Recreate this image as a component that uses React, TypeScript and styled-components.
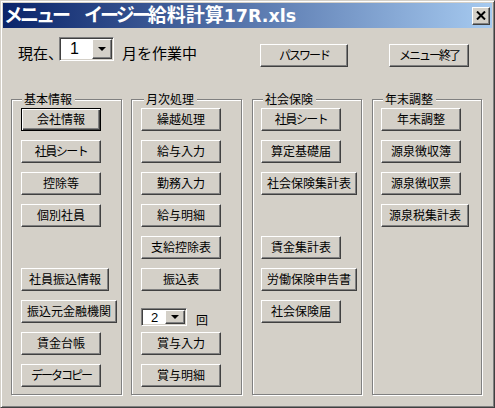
import React from "react";
import styled, { createGlobalStyle } from "styled-components";

const GlobalStyle = createGlobalStyle`
  html, body {
    margin: 0;
    padding: 0;
    background: #d4d0c8;
  }
  body {
    font-family: "Liberation Sans", "Noto Sans CJK JP", sans-serif;
  }
`;

const face = `"Liberation Sans", "Noto Sans CJK JP", sans-serif`;

const Window = styled.div`
  box-sizing: border-box;
  width: 495px;
  height: 408px;
  background: #d4d0c8;
  border: 1px solid;
  border-color: #d4d0c8 #404040 #404040 #d4d0c8;
  box-shadow: inset 1px 1px #fff, inset -1px -1px #808080;
  padding: 2px;
  display: flex;
  flex-direction: column;
`;

const TitleBar = styled.div`
  height: 25px;
  display: flex;
  align-items: center;
  justify-content: space-between;
  background: linear-gradient(to right, #0a246a, #a6caf0);
  padding: 0 2px 0 1px;
`;

const TitleText = styled.div`
  color: #fff;
  font-family: ${face};
  font-weight: bold;
  font-size: 19px;
  line-height: 25px;
  white-space: pre;
`;

// kana are narrower than kanji in the original UI font
const Kana = styled.span<{ $ml?: number }>`
  letter-spacing: -3px;
  margin-left: ${({ $ml }) => $ml ?? 0}px;
`;

const Latin = styled.span`
  font-family: "DejaVu Sans", sans-serif;
  font-size: 17.5px;
`;

const CloseButton = styled.div`
  box-sizing: border-box;
  width: 18px;
  height: 18px;
  background: #d4d0c8;
  border: 1px solid;
  border-color: #fff #404040 #404040 #fff;
  box-shadow: inset -1px -1px #808080;
  display: flex;
  align-items: center;
  justify-content: center;
`;

const Body = styled.div`
  display: flex;
  flex-direction: column;
  padding: 9px 0 0 8px;
`;

const TopBar = styled.div`
  display: flex;
  align-items: flex-start;
  justify-content: space-between;
  padding: 0 23px 0 7px;
  height: 30px;
`;

const TopLeft = styled.div`
  display: flex;
  align-items: flex-start;
`;

const TopRight = styled.div`
  display: flex;
  gap: 41px;
  padding-top: 7px;
`;

const TopLabel = styled.span<{ $w?: number; $ml?: number }>`
  font-family: ${face};
  font-size: 15px;
  line-height: 24px;
  padding-top: 5px;
  color: #000;
  white-space: nowrap;
  width: ${({ $w }) => ($w ? `${$w}px` : "auto")};
  margin-left: ${({ $ml }) => $ml ?? 0}px;
`;

const Combo = styled.div<{ $w: number; $h: number }>`
  box-sizing: border-box;
  width: ${({ $w }) => $w}px;
  height: ${({ $h }) => $h}px;
  border: 1px solid;
  border-color: #808080 #fff #fff #808080;
  box-shadow: inset 1px 1px #404040, inset -1px -1px #d4d0c8;
  background: #fff;
  display: flex;
  padding: 1px;
  position: relative;
  z-index: 1;
`;

const ComboValue = styled.div<{ $size: number; $pl: number }>`
  flex: 1;
  font-family: ${face};
  font-size: ${({ $size }) => $size}px;
  color: #000;
  display: flex;
  align-items: center;
  padding-left: ${({ $pl }) => $pl}px;
`;

const ComboArrow = styled.div<{ $w: number }>`
  box-sizing: border-box;
  width: ${({ $w }) => $w}px;
  background: #d4d0c8;
  border: 1px solid;
  border-color: #fff #404040 #404040 #fff;
  box-shadow: inset -1px -1px #808080;
  display: flex;
  align-items: center;
  justify-content: center;
`;

const Triangle = styled.span<{ $half: number }>`
  width: 0;
  height: 0;
  border-left: ${({ $half }) => $half}px solid transparent;
  border-right: ${({ $half }) => $half}px solid transparent;
  border-top: ${({ $half }) => $half}px solid #000;
`;

const Button = styled.button<{ $w: number; $default?: boolean; $ls?: number }>`
  box-sizing: border-box;
  width: ${({ $w }) => $w}px;
  height: 23px;
  flex: none;
  margin: 0;
  padding: 0;
  background: #d4d0c8;
  font-family: ${face};
  font-size: 12px;
  line-height: 1;
  letter-spacing: ${({ $ls }) => $ls ?? 0}px;
  color: #000;
  white-space: nowrap;
  border: 1px solid;
  border-color: ${({ $default }) =>
    $default ? "#000" : "#fff #404040 #404040 #fff"};
  box-shadow: ${({ $default }) =>
    $default
      ? "inset 1px 1px #fff, inset -1px -1px #404040, inset -2px -2px #808080"
      : "inset -1px -1px #808080"};
`;

const Groups = styled.div`
  display: flex;
  margin-top: 32px;
`;

const Group = styled.div<{ $w: number; $ml: number; $pl: number }>`
  box-sizing: border-box;
  position: relative;
  width: ${({ $w }) => $w}px;
  height: 296px;
  margin-left: ${({ $ml }) => $ml}px;
  padding: 8px 0 0 ${({ $pl }) => $pl}px;
  border: 1px solid #808080;
  box-shadow: inset 1px 1px #fff, 1px 1px #fff;
  display: flex;
  flex-direction: column;
  align-items: flex-start;
  gap: 9px;
`;

const Legend = styled.span<{ $left: number }>`
  position: absolute;
  top: -7px;
  left: ${({ $left }) => $left}px;
  padding: 0 3px 0 2px;
  background: #d4d0c8;
  font-family: ${face};
  font-size: 12px;
  line-height: 14px;
  color: #000;
`;

const Spacer = styled.div`
  height: 23px;
  flex: none;
`;

const ComboRow = styled.div`
  display: flex;
  align-items: flex-end;
  margin: 8px 0 -3px;
  height: 18px;
`;

const Times = styled.span`
  font-family: ${face};
  font-size: 12px;
  line-height: 12px;
  margin-left: 9px;
  margin-bottom: -1px;
  color: #000;
`;

type Item =
  | { kind: "button"; label: string; w?: number; def?: boolean; ls?: number }
  | { kind: "gap" }
  | { kind: "combo" };

interface GroupDef {
  title: string;
  w: number;
  ml: number;
  pl: number;
  legend: number;
  items: Item[];
}

const b = (label: string, w = 80, ls = 0, def = false): Item => ({
  kind: "button",
  label,
  w,
  ls,
  def,
});

const groups: GroupDef[] = [
  {
    title: "基本情報",
    w: 111,
    ml: 0,
    pl: 9,
    legend: 10,
    items: [
      b("会社情報", 80, 0, true),
      b("社員シート", 80, -1.5),
      b("控除等"),
      b("個別社員"),
      { kind: "gap" },
      b("社員振込情報", 88),
      b("振込元金融機関", 96),
      b("賃金台帳"),
      b("データコピー", 80, -2),
    ],
  },
  {
    title: "月次処理",
    w: 111,
    ml: 9,
    pl: 9,
    legend: 12,
    items: [
      b("繰越処理"),
      b("給与入力"),
      b("勤務入力"),
      b("給与明細"),
      b("支給控除表"),
      b("振込表"),
      { kind: "combo" },
      b("賞与入力"),
      b("賞与明細"),
    ],
  },
  {
    title: "社会保険",
    w: 110,
    ml: 10,
    pl: 8,
    legend: 10,
    items: [
      b("社員シート", 80, -1.5),
      b("算定基礎届"),
      b("社会保険集計表", 96),
      { kind: "gap" },
      b("賃金集計表"),
      b("労働保険申告書", 96),
      b("社会保険届"),
    ],
  },
  {
    title: "年末調整",
    w: 110,
    ml: 10,
    pl: 8,
    legend: 10,
    items: [
      b("年末調整"),
      b("源泉徴収簿"),
      b("源泉徴収票"),
      b("源泉税集計表", 88),
    ],
  },
];

const renderItem = (item: Item, i: number) => {
  if (item.kind === "gap") return <Spacer key={i} />;
  if (item.kind === "combo")
    return (
      <ComboRow key={i}>
        <Combo $w={46} $h={18}>
          <ComboValue $size={13} $pl={8}>
            2
          </ComboValue>
          <ComboArrow $w={20}>
            <Triangle $half={4} />
          </ComboArrow>
        </Combo>
        <Times>回</Times>
      </ComboRow>
    );
  return (
    <Button key={i} $w={item.w ?? 80} $default={item.def} $ls={item.ls}>
      {item.label}
    </Button>
  );
};

const App: React.FC = () => {
  return (
    <>
      <GlobalStyle />
      <Window>
        <TitleBar>
          <TitleText>
            <Kana>メニュー</Kana>
            <Kana $ml={16}>イージー</Kana>
            給料計算
            <Latin>17R.xls</Latin>
          </TitleText>
          <CloseButton>
            <svg width="10" height="9" viewBox="0 0 10 9">
              <path d="M1 0.5 L9 8.5 M9 0.5 L1 8.5" stroke="#000" strokeWidth="2" />
            </svg>
          </CloseButton>
        </TitleBar>
        <Body>
          <TopBar>
            <TopLeft>
              <TopLabel $w={41}>現在、</TopLabel>
              <Combo $w={55} $h={24}>
                <ComboValue $size={16} $pl={9}>
                  1
                </ComboValue>
                <ComboArrow $w={20}>
                  <Triangle $half={4} />
                </ComboArrow>
              </Combo>
              <TopLabel $ml={8}>月を作業中</TopLabel>
            </TopLeft>
            <TopRight>
              <Button $w={88} $ls={-2}>
                パスワード
              </Button>
              <Button $w={80} $ls={-2}>
                メニュー終了
              </Button>
            </TopRight>
          </TopBar>
          <Groups>
            {groups.map((g) => (
              <Group key={g.title} $w={g.w} $ml={g.ml} $pl={g.pl}>
                <Legend $left={g.legend}>{g.title}</Legend>
                {g.items.map(renderItem)}
              </Group>
            ))}
          </Groups>
        </Body>
      </Window>
    </>
  );
};

export default App;
